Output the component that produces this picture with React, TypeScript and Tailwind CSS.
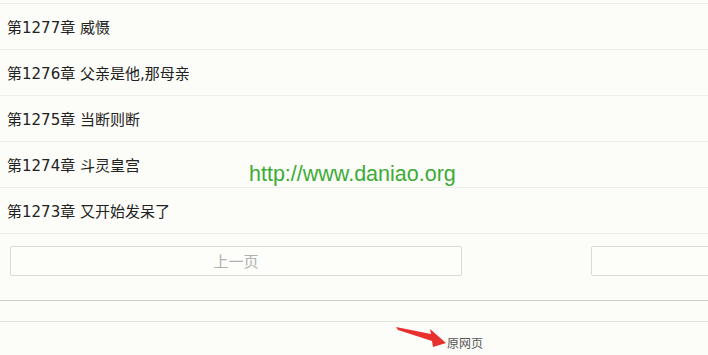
const chapters = [
  '第1277章 威慑',
  '第1276章 父亲是他,那母亲',
  '第1275章 当断则断',
  '第1274章 斗灵皇宫',
  '第1273章 又开始发呆了',
]

export default function App() {
  return (
    <div
      className="relative w-[708px] h-[355px] overflow-hidden bg-[#fcfcf8]"
      style={{ fontFamily: '"Noto Sans CJK SC", "Liberation Sans", sans-serif' }}
    >
      <ul className="pt-[3px]">
        {chapters.map((title) => (
          <li
            key={title}
            className="h-[46px] flex items-center pl-[7px] pt-[4px] border-t border-[#efefe9] text-[15px] text-[#222]"
            style={{ fontFamily: '"DejaVu Sans", "Noto Sans CJK SC", sans-serif' }}
          >
            {title}
          </li>
        ))}
      </ul>
      <div className="border-t border-[#efefe9] pt-[12px] pb-[24px] pl-[10px] flex gap-[129px]">
        <button className="shrink-0 w-[452px] h-[30px] rounded-[2px] border border-[#dcdcd6] bg-[#fdfdfa] text-[15px] text-[#b0b0b0]">
          上一页
        </button>
        <button className="shrink-0 w-[452px] h-[30px] rounded-[2px] border border-[#dcdcd6] bg-[#fdfdfa]" />
      </div>
      <div className="h-[21px] border-t border-[#cfcfca]" />
      <div className="border-t border-[#e6e6e0] pt-[12px] pl-[447px] text-[12px] text-[#555]">
        原网页
      </div>

      {/* watermark */}
      <div
        className="absolute left-[249px] top-[164px] text-[21.5px] leading-none text-[#3cab37]"
        style={{ fontFamily: '"Liberation Sans", Arial, sans-serif' }}
      >
        http://www.daniao.org
      </div>

      {/* red arrow */}
      <svg className="absolute left-[394px] top-[325px]" width="54" height="24" viewBox="0 0 54 24">
        <polygon points="2,2 37,9 36,4 52,18 39,22 38,16 4,5" fill="#e8302f" />
      </svg>
    </div>
  )
}
